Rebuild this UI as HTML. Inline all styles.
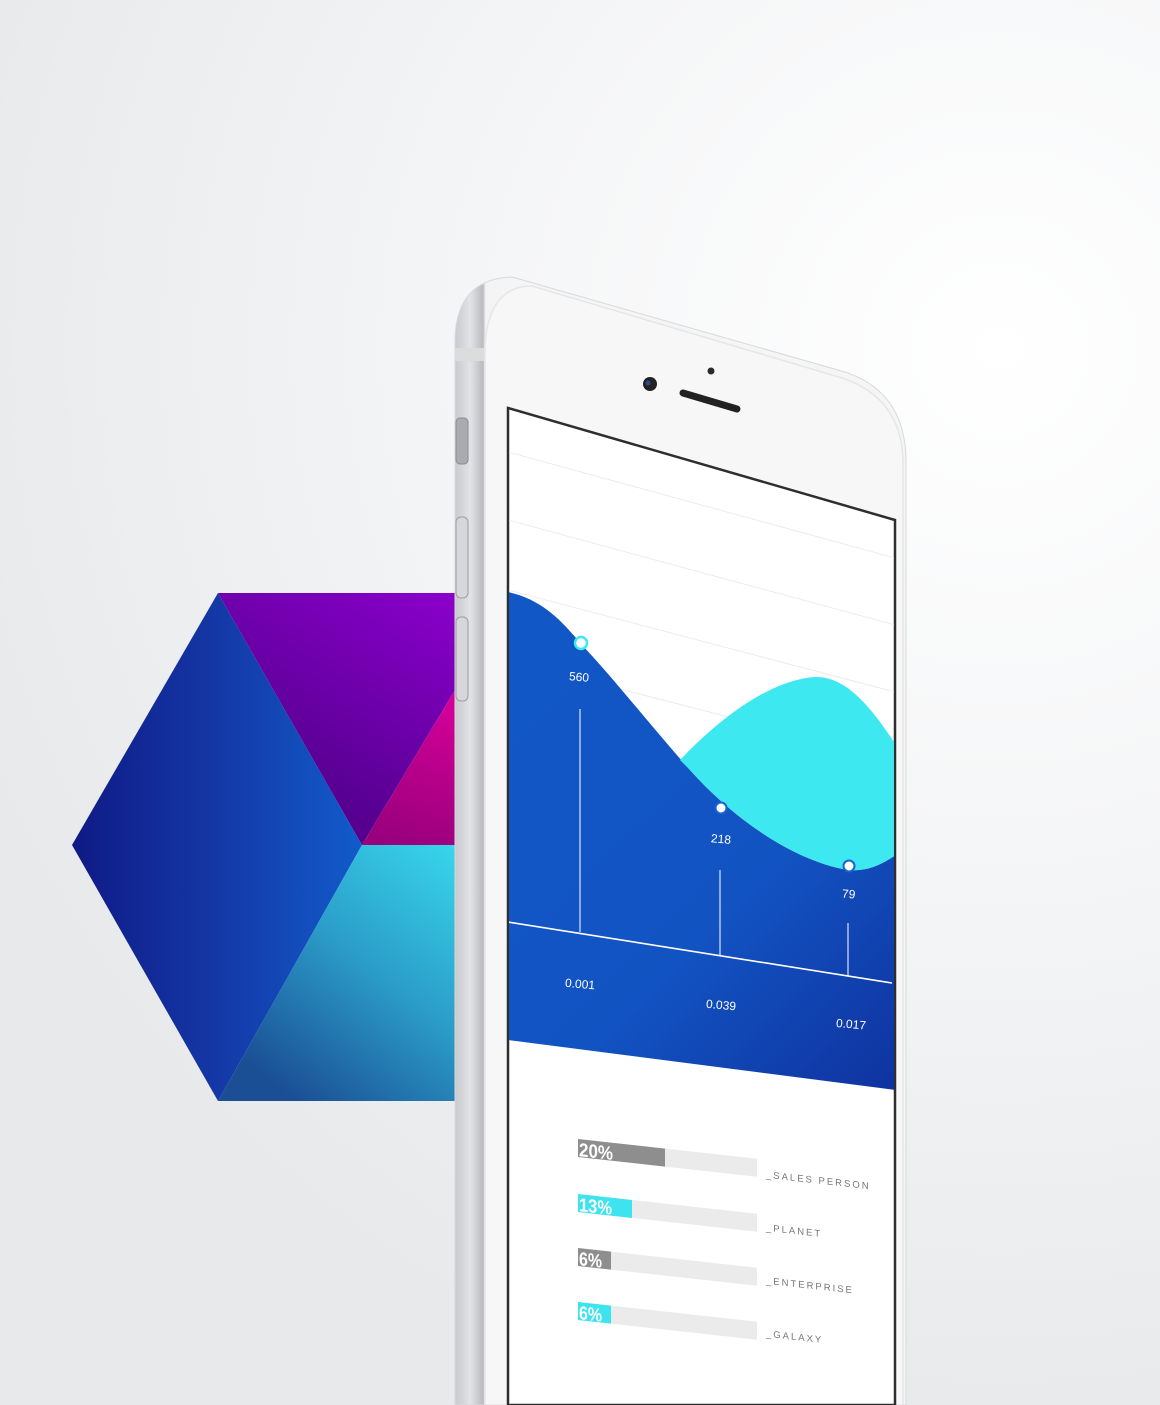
<!DOCTYPE html>
<html><head><meta charset="utf-8"><style>
html,body{margin:0;padding:0;width:1160px;height:1405px;overflow:hidden;}
body{background:#eceef0;}
svg{display:block;font-family:"Liberation Sans",sans-serif;}
</style></head><body>
<svg width="1160" height="1405" viewBox="0 0 1160 1405" xmlns="http://www.w3.org/2000/svg">
<defs>
<radialGradient id="bg" cx="1000" cy="350" r="1100" gradientUnits="userSpaceOnUse">
<stop offset="0" stop-color="#ffffff"/><stop offset="0.45" stop-color="#f5f6f7"/><stop offset="1" stop-color="#e7e9eb"/>
</radialGradient>
<linearGradient id="lf" x1="72" y1="0" x2="362" y2="0" gradientUnits="userSpaceOnUse">
<stop offset="0" stop-color="#0f1a86"/><stop offset="0.5" stop-color="#1438a6"/><stop offset="1" stop-color="#125bcb"/>
</linearGradient>
<linearGradient id="tp" x1="455" y1="592" x2="330" y2="800" gradientUnits="userSpaceOnUse">
<stop offset="0" stop-color="#8b00cc"/><stop offset="1" stop-color="#560090"/>
</linearGradient>
<linearGradient id="mg" x1="455" y1="690" x2="400" y2="845" gradientUnits="userSpaceOnUse">
<stop offset="0" stop-color="#d9009a"/><stop offset="1" stop-color="#98007c"/>
</linearGradient>
<linearGradient id="bt" x1="455" y1="845" x2="270" y2="1080" gradientUnits="userSpaceOnUse">
<stop offset="0" stop-color="#38d6ec"/><stop offset="0.5" stop-color="#2b9cc8"/><stop offset="1" stop-color="#1b4f95"/>
</linearGradient>
<linearGradient id="silver" x1="455" y1="0" x2="506" y2="0" gradientUnits="userSpaceOnUse">
<stop offset="0" stop-color="#c9cace"/><stop offset="0.3" stop-color="#e2e3e6"/><stop offset="0.55" stop-color="#b9bbc0"/><stop offset="0.6" stop-color="#f3f3f4"/><stop offset="1" stop-color="#f5f5f5"/>
</linearGradient>
<linearGradient id="blue" x1="508" y1="700" x2="895" y2="1090" gradientUnits="userSpaceOnUse">
<stop offset="0" stop-color="#1257c6"/><stop offset="0.55" stop-color="#1253c2"/><stop offset="1" stop-color="#0f33a0"/>
</linearGradient>
<clipPath id="scr"><polygon points="509,409 894,521 894,1405 509,1405"/></clipPath>
</defs>
<rect width="1160" height="1405" fill="url(#bg)"/>

<polygon points="72,845 218,593 362,845 218,1101" fill="url(#lf)"/>
<polygon points="218,593 455,593 455,690 362,845" fill="url(#tp)"/>
<polygon points="455,690 362,845 455,845" fill="url(#mg)"/>
<polygon points="362,845 455,845 455,1101 218,1101" fill="url(#bt)"/>

<path d="M455,1405 L455,338 Q457,279 512,277 L845,372 Q906,392 906,462 L906,1405 Z" fill="url(#silver)" stroke="#d8d9db" stroke-width="1"/>
<rect x="455" y="348" width="30" height="13" fill="#dcdcdd"/>
<path d="M485,1405 L485,345 Q489,286 532,286 L842,378 Q902,398 903,462 L903,1405 Z" fill="#f7f7f7" stroke="#e6e6e7" stroke-width="1.5"/>
<rect x="456" y="418" width="12" height="46" rx="4" fill="#a9abb0" stroke="#8a8c90"/>
<rect x="456" y="517" width="12" height="81" rx="5" fill="#d6d7da" stroke="#9c9ea2"/>
<rect x="456" y="617" width="12" height="84" rx="5" fill="#d6d7da" stroke="#9c9ea2"/>
<circle cx="650" cy="384" r="7" fill="#222"/><circle cx="648" cy="383" r="2.5" fill="#2a4a8a"/>
<circle cx="711" cy="371" r="3.5" fill="#2a2a2a"/>
<line x1="683" y1="393" x2="737" y2="409" stroke="#222" stroke-width="7" stroke-linecap="round"/>

<polygon points="508,408 895,520 895,1405 508,1405" fill="#fff" stroke="#2e2e2e" stroke-width="2.5"/>
<g clip-path="url(#scr)">
<g stroke="#ececec" stroke-width="1">
<line x1="508" y1="452" x2="895" y2="558"/>
<line x1="508" y1="520" x2="895" y2="625"/>
<line x1="508" y1="590" x2="895" y2="692"/>
<line x1="508" y1="660" x2="895" y2="760"/>
</g>
<path d="M508,592 C545,600 565,625 582,645 C615,680 650,725 690,770 C730,815 790,860 848,870 C870,872 885,862 896,855 L896,1090 L508,1040 Z" fill="url(#blue)"/>
<path d="M680,760 C720,718 770,680 815,677 C845,676 870,705 896,745 L896,855 C885,862 870,872 848,870 C790,860 730,815 690,770 Z" fill="#3de8f0"/>
<line x1="508" y1="922" x2="892" y2="983" stroke="#fff" stroke-width="1.6"/>
<g stroke="#fff" stroke-width="1.2" opacity="0.85">
<line x1="580" y1="709" x2="580" y2="932"/>
<line x1="720" y1="870" x2="720" y2="955"/>
<line x1="848" y1="923" x2="848" y2="976"/>
</g>
<circle cx="581" cy="643" r="6" fill="#fff" stroke="#3de8f0" stroke-width="2.5"/>
<circle cx="721" cy="808" r="5.5" fill="#fff" stroke="#1a62d2" stroke-width="2"/>
<circle cx="849" cy="866" r="5.5" fill="#fff" stroke="#1a62d2" stroke-width="2"/>
<g fill="#fff" font-size="12">
<text x="569" y="681" transform="rotate(5 579 677)">560</text>
<text x="711" y="843" transform="rotate(5 720 839)">218</text>
<text x="842" y="898" transform="rotate(5 848 894)">79</text>
<text x="565" y="988" transform="rotate(5 579 984)">0.001</text>
<text x="706" y="1009" transform="rotate(5 720 1005)">0.039</text>
<text x="836" y="1028" transform="rotate(5 848 1024)">0.017</text>
</g>

<g transform="translate(578,1139) skewY(6.3)">
<rect x="0" y="0" width="179" height="18" fill="#ebebeb"/>
<rect x="0" y="0" width="87" height="18" fill="#8e8e8e"/>
<text x="1" y="17" fill="#fff" font-size="19" font-weight="bold" textLength="34" lengthAdjust="spacingAndGlyphs">20%</text>
<text x="188" y="18" fill="#777" font-size="9.5" letter-spacing="2">_SALES PERSON</text>
</g>
<g transform="translate(578,1194) skewY(6.3)">
<rect x="0" y="0" width="179" height="18" fill="#ebebeb"/>
<rect x="0" y="0" width="54" height="18" fill="#3de3ee"/>
<text x="1" y="17" fill="#fff" font-size="19" font-weight="bold" textLength="33" lengthAdjust="spacingAndGlyphs">13%</text>
<text x="188" y="16" fill="#777" font-size="9.5" letter-spacing="2">_PLANET</text>
</g>
<g transform="translate(578,1248) skewY(6.3)">
<rect x="0" y="0" width="179" height="18" fill="#ebebeb"/>
<rect x="0" y="0" width="33" height="18" fill="#8e8e8e"/>
<text x="1" y="17" fill="#fff" font-size="19" font-weight="bold" textLength="23" lengthAdjust="spacingAndGlyphs">6%</text>
<text x="188" y="15" fill="#777" font-size="9.5" letter-spacing="2">_ENTERPRISE</text>
</g>
<g transform="translate(578,1302) skewY(6.3)">
<rect x="0" y="0" width="179" height="18" fill="#ebebeb"/>
<rect x="0" y="0" width="33" height="18" fill="#3de3ee"/>
<text x="1" y="17" fill="#fff" font-size="19" font-weight="bold" textLength="23" lengthAdjust="spacingAndGlyphs">6%</text>
<text x="188" y="14" fill="#777" font-size="9.5" letter-spacing="2">_GALAXY</text>
</g>
</g>
</svg>
</body></html>
